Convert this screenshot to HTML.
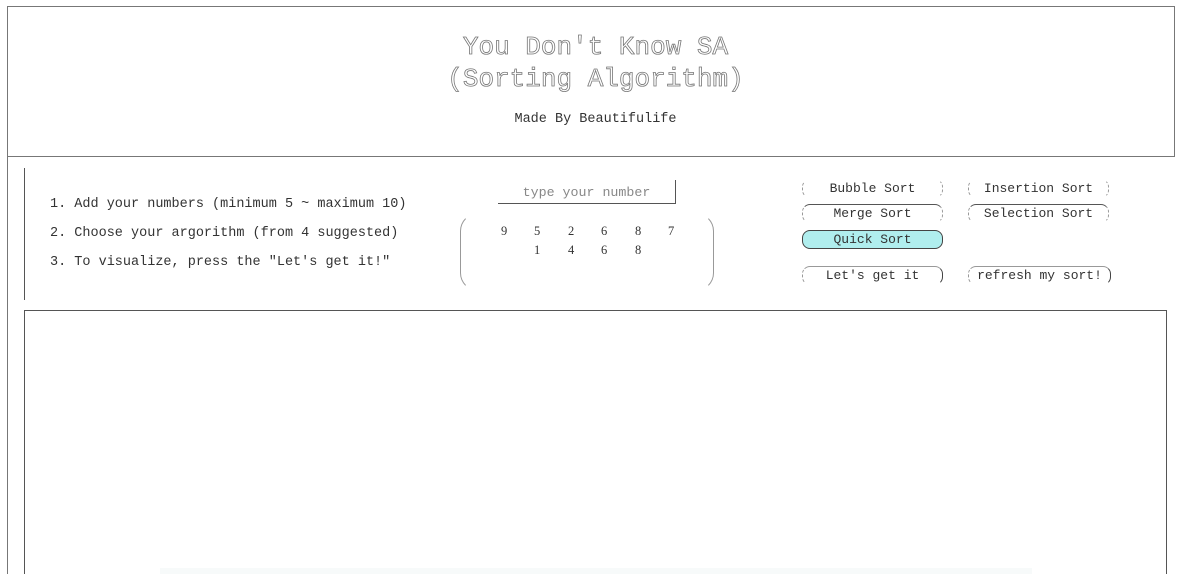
<!DOCTYPE html>
<html><head><meta charset="utf-8"><style>
html,body{margin:0;width:1191px;height:574px;overflow:hidden}
body{background:#fff;font-family:"Liberation Mono",monospace;color:#333;position:relative}
.abs{position:absolute}
.title{left:0;width:1191px;text-align:center;font-size:26px;color:#fff;-webkit-text-stroke:0.8px #777}
.btn{position:absolute;height:19px;font-size:13px;text-align:center;line-height:18px;color:#333;border:1px dashed #999;border-radius:8px;box-sizing:border-box;border-top-color:#fff;border-bottom-color:#fff}
.li{left:50px;font-size:13.5px;color:#333}
.n{font-size:12.5px;font-family:"Liberation Serif",serif}
</style></head><body>
<div class="abs" style="left:7px;top:6px;width:1168px;height:151px;border:1px solid #777;box-sizing:border-box"></div>
<div class="abs" style="left:7px;top:157px;width:1px;height:420px;background:#777"></div>
<div class="abs title" style="top:32px">You Don't Know SA</div>
<div class="abs title" style="top:64px">(Sorting Algorithm)</div>
<div class="abs" style="left:0;width:1191px;text-align:center;top:112px;font-size:13.5px">Made By Beautifulife</div>

<div class="abs" style="left:24px;top:168px;width:1px;height:132px;background:#555"></div>
<div class="abs li" style="top:197px">1. Add your numbers (minimum 5 ~ maximum 10)</div>
<div class="abs li" style="top:226px">2. Choose your argorithm (from 4 suggested)</div>
<div class="abs li" style="top:255px">3. To visualize, press the "Let's get it!"</div>

<div class="abs" style="left:498px;top:180px;width:178px;height:24px;border-bottom:1px solid #555;border-right:1px solid #555;box-sizing:border-box;text-align:center;font-size:13.3px;color:#888;line-height:26px">type your number</div>
<div class="abs" style="left:460px;top:213px;width:254px;height:78px;border:1px solid #999;border-top-color:#fff;border-bottom-color:#fff;border-radius:18px;box-sizing:border-box"></div>
<div class="abs n" style="left:501px;top:224px">9</div>
<div class="abs n" style="left:534px;top:224px">5</div>
<div class="abs n" style="left:568px;top:224px">2</div>
<div class="abs n" style="left:601px;top:224px">6</div>
<div class="abs n" style="left:635px;top:224px">8</div>
<div class="abs n" style="left:668px;top:224px">7</div>
<div class="abs n" style="left:534px;top:243px">1</div>
<div class="abs n" style="left:568px;top:243px">4</div>
<div class="abs n" style="left:601px;top:243px">6</div>
<div class="abs n" style="left:635px;top:243px">8</div>

<div class="btn" style="left:802px;top:179px;width:141px">Bubble Sort</div>
<div class="btn" style="left:968px;top:179px;width:141px">Insertion Sort</div>
<div class="btn" style="left:802px;top:204px;width:141px;border-top:1px solid #555">Merge Sort</div>
<div class="btn" style="left:968px;top:204px;width:141px;border-top:1px solid #555">Selection Sort</div>
<div class="btn" style="left:802px;top:230px;width:141px;background:#b0eeee;border:1px solid #444">Quick Sort</div>
<div class="btn" style="left:802px;top:266px;width:141px;border-top:1px solid #999;border-right:1px solid #444">Let's get it</div>
<div class="btn" style="left:968px;top:266px;width:143px;border-top:1px solid #999;border-right:1px solid #444">refresh my sort!</div>

<div class="abs" style="left:24px;top:310px;width:1143px;height:264px;border:1px solid #555;border-bottom:none;box-sizing:border-box"></div>
<div class="abs" style="left:160px;top:568px;width:872px;height:6px;background:#f7fafa"></div>
</body></html>
